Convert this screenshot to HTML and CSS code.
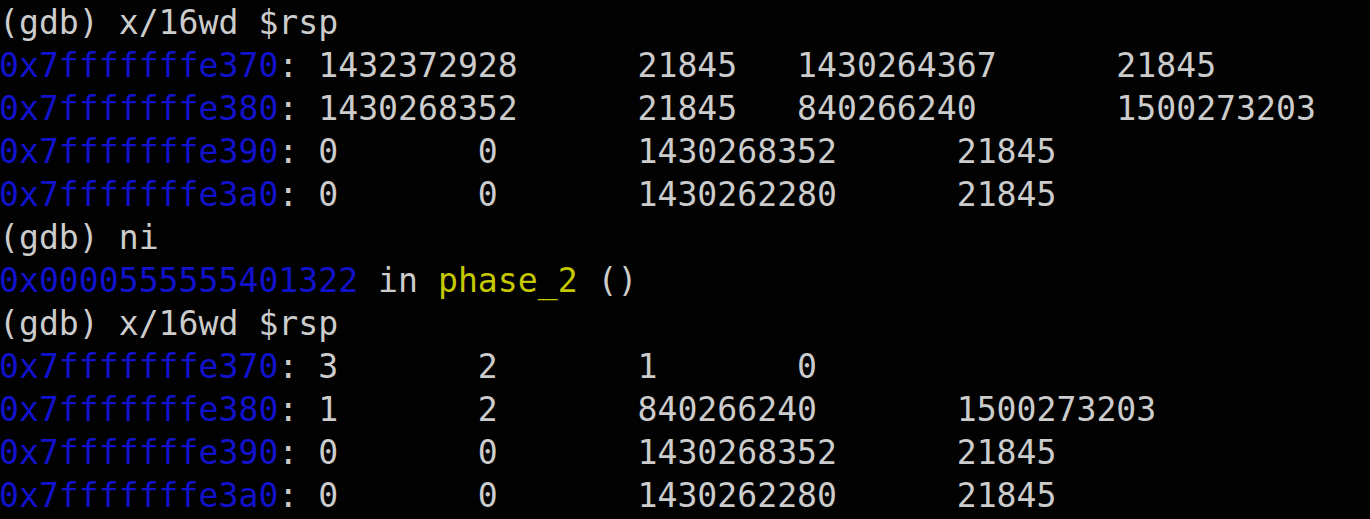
FILE: index.html
```html
<!DOCTYPE html>
<html lang="en">
<head>
<meta charset="utf-8">
<title>gdb</title>
<link rel="stylesheet" href="styles.css">
</head>
<body>
<div class="term">
<div class="line">(gdb) x/16wd $rsp</div>
<div class="line"><span class="addr">0x7fffffffe370</span>:	1432372928	21845	1430264367	21845</div>
<div class="line"><span class="addr">0x7fffffffe380</span>:	1430268352	21845	840266240	1500273203</div>
<div class="line"><span class="addr">0x7fffffffe390</span>:	0	0	1430268352	21845</div>
<div class="line"><span class="addr">0x7fffffffe3a0</span>:	0	0	1430262280	21845</div>
<div class="line">(gdb) ni</div>
<div class="line"><span class="addr">0x0000555555401322</span> in <span class="fn">phase_2</span> ()</div>
<div class="line">(gdb) x/16wd $rsp</div>
<div class="line"><span class="addr">0x7fffffffe370</span>:	3	2	1	0</div>
<div class="line"><span class="addr">0x7fffffffe380</span>:	1	2	840266240	1500273203</div>
<div class="line"><span class="addr">0x7fffffffe390</span>:	0	0	1430268352	21845</div>
<div class="line"><span class="addr">0x7fffffffe3a0</span>:	0	0	1430262280	21845</div>
</div>
</body>
</html>
```

FILE: styles.css
```css
html, body {
  margin: 0;
  padding: 0;
  background: #020202;
  height: 100%;
  overflow: hidden;
}

.term {
  margin: 1px 0 0 -1px;
  font-family: "DejaVu Sans Mono", "Liberation Mono", monospace;
  font-size: 33.15px;
  line-height: 43px;
  color: #cccccc;
}

.line {
  white-space: pre;
  tab-size: 8;
  height: 43px;
}

.addr {
  color: #1212cc;
}

.fn {
  color: #c6c800;
}
```
